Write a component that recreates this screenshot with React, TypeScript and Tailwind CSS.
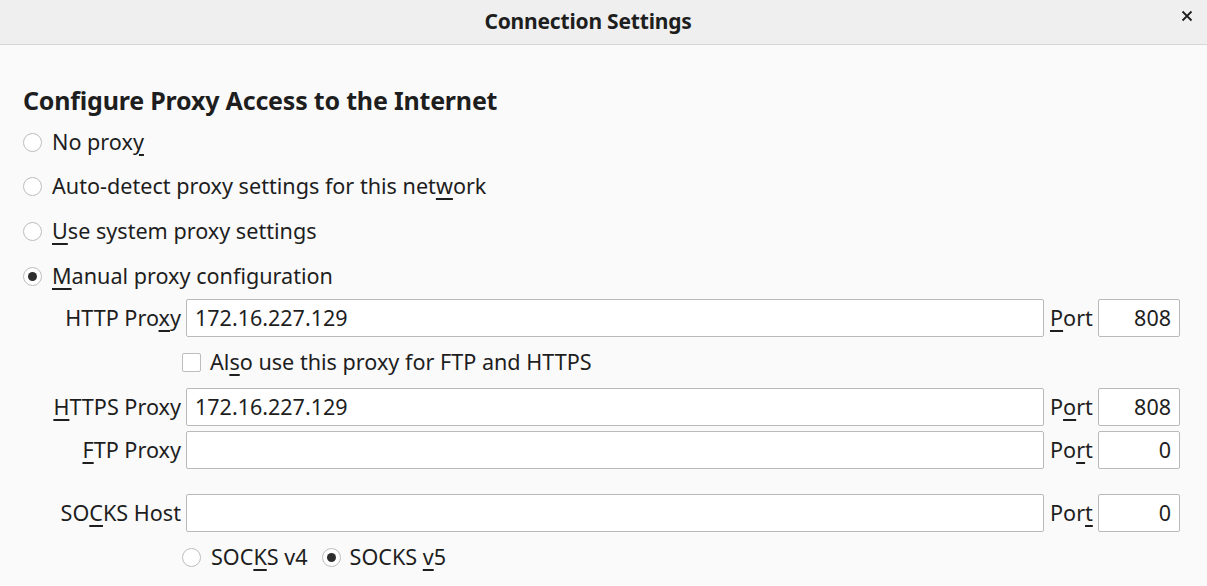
import React from "react";

const U = ({ children }: { children: React.ReactNode }) => (
  <span className="underline decoration-[2px] underline-offset-[4px]">{children}</span>
);

const Radio = ({ checked }: { checked?: boolean }) => (
  <span className="w-[19px] h-[19px] rounded-full border border-[#bdbdbd] bg-white flex items-center justify-center shrink-0">
    {checked && <span className="w-[9px] h-[9px] rounded-full bg-[#2e2e2e]" />}
  </span>
);

const Input = ({ value, right }: { value?: string; right?: boolean }) => (
  <div
    className={
      "h-[38px] border border-[#bababa] rounded-[2px] bg-white flex items-center px-[8px] text-[21.5px] " +
      (right ? "justify-end" : "")
    }
  >
    {value}
  </div>
);

export default function App() {
  return (
    <div
      className="w-[1207px] h-[586px] bg-[#fafafa] text-[#1e1e1e] overflow-hidden"
      style={{ fontFamily: '"Noto Sans", "Open Sans", sans-serif' }}
    >
      <div className="h-[45px] bg-[#efefef] border-b border-[#d6d6d6] flex items-center justify-center pr-[31px] relative">
        <span className="text-[21px] font-bold tracking-[-0.2px]">Connection Settings</span>
        <span className="absolute right-[14px] top-[10px] text-[18px] leading-[24px]">
          <svg width="12" height="12" viewBox="0 0 12 12">
            <path d="M1.5 1.5L10.5 10.5M10.5 1.5L1.5 10.5" stroke="#1e1e1e" strokeWidth="1.8" />
          </svg>
        </span>
      </div>

      <div className="pl-[23px] pr-[27px] pt-[40px]">
        <h2 className="text-[25px] leading-[30px] font-bold tracking-[-0.2px]">
          Configure Proxy Access to the Internet
        </h2>
        <div className="mt-[5px] text-[21.6px]">
          <div className="h-[44px] flex items-center gap-[10px]">
            <Radio />
            <span>No prox<U>y</U></span>
          </div>
          <div className="h-[45px] flex items-center gap-[10px]">
            <Radio />
            <span>Auto-detect proxy settings for this net<U>w</U>ork</span>
          </div>
          <div className="h-[45px] flex items-center gap-[10px]">
            <Radio />
            <span><U>U</U>se system proxy settings</span>
          </div>
          <div className="h-[45px] flex items-center gap-[10px]">
            <Radio checked />
            <span><U>M</U>anual proxy configuration</span>
          </div>
        </div>

        <div className="-ml-[23px] grid grid-cols-[181px_1fr_44px_82px] gap-x-[5px] text-[21.6px] items-center">
          <span className="text-right whitespace-nowrap">HTTP Pro<U>x</U>y</span>
          <Input value="172.16.227.129" />
          <span className="ml-[1px]"><U>P</U>ort</span>
          <Input value="808" right />

          <div className="col-start-2 col-span-3 h-[51px] -ml-[4px] flex items-center gap-[9px]">
            <span className="w-[19px] h-[19px] border border-[#bdbdbd] rounded-[2px] bg-white" />
            <span>Al<U>s</U>o use this proxy for FTP and HTTPS</span>
          </div>

          <span className="text-right whitespace-nowrap"><U>H</U>TTPS Proxy</span>
          <Input value="172.16.227.129" />
          <span className="ml-[1px]">P<U>o</U>rt</span>
          <Input value="808" right />

          <span className="text-right mt-[5px] whitespace-nowrap"><U>F</U>TP Proxy</span>
          <div className="mt-[5px]"><Input /></div>
          <span className="mt-[5px] ml-[1px]">Po<U>r</U>t</span>
          <div className="mt-[5px]"><Input value="0" right /></div>

          <span className="text-right mt-[25px] whitespace-nowrap">SO<U>C</U>KS Host</span>
          <div className="mt-[25px]"><Input /></div>
          <span className="mt-[25px] ml-[1px]">Por<U>t</U></span>
          <div className="mt-[25px]"><Input value="0" right /></div>

          <div className="col-start-2 col-span-3 h-[50px] -ml-[4px] flex items-center">
            <Radio />
            <span className="ml-[10px]">SOC<U>K</U>S v4</span>
            <span className="ml-[14px]"><Radio checked /></span>
            <span className="ml-[9px]">SOCKS <U>v</U>5</span>
          </div>
        </div>
      </div>
    </div>
  );
}
